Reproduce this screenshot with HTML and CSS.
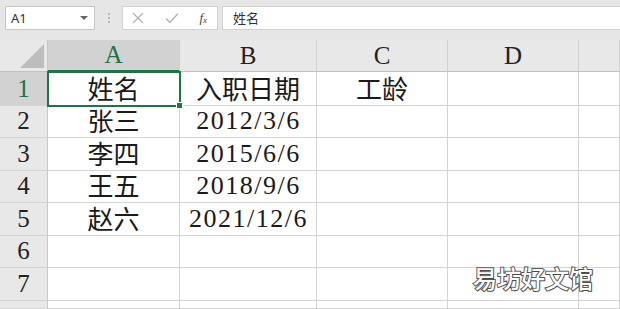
FILE: index.html
```html
<!DOCTYPE html>
<html>
<head>
<title>工作簿</title>
<meta charset="utf-8">
<link rel="stylesheet" href="styles.css">
</head>
<body>

<div class="toolbar">
  <div class="namebox">
    <span>A1</span>
    <span class="caret"></span>
  </div>
  <div class="grip"><i></i><i></i><i></i></div>
  <div class="fxbox">
    <svg width="12" height="12" viewBox="0 0 12 12"><path d="M1 1L11 11M11 1L1 11" stroke="#b4b4b4" stroke-width="1.3" fill="none"/></svg>
    <svg width="14" height="12" viewBox="0 0 14 12"><path d="M1 6.5L5 10.5L13 1.5" stroke="#b4b4b4" stroke-width="1.5" fill="none"/></svg>
    <span class="fx">f<sub>x</sub></span>
  </div>
  <div class="formula">姓名</div>
</div>

<div class="sheet">
  <div class="corner"><span class="tri"></span></div>
  <div class="colhead sel">A</div>
  <div class="colhead">B</div>
  <div class="colhead">C</div>
  <div class="colhead">D</div>
  <div class="colhead"></div>

  <div class="rowhead sel">1</div>
  <div class="cell active">姓名</div>
  <div class="cell">入职日期</div>
  <div class="cell">工龄</div>
  <div class="cell"></div>
  <div class="cell"></div>

  <div class="rowhead">2</div>
  <div class="cell">张三</div>
  <div class="cell num">2012/3/6</div>
  <div class="cell"></div>
  <div class="cell"></div>
  <div class="cell"></div>

  <div class="rowhead">3</div>
  <div class="cell">李四</div>
  <div class="cell num">2015/6/6</div>
  <div class="cell"></div>
  <div class="cell"></div>
  <div class="cell"></div>

  <div class="rowhead">4</div>
  <div class="cell">王五</div>
  <div class="cell num">2018/9/6</div>
  <div class="cell"></div>
  <div class="cell"></div>
  <div class="cell"></div>

  <div class="rowhead">5</div>
  <div class="cell">赵六</div>
  <div class="cell num">2021/12/6</div>
  <div class="cell"></div>
  <div class="cell"></div>
  <div class="cell"></div>

  <div class="rowhead">6</div>
  <div class="cell"></div>
  <div class="cell"></div>
  <div class="cell"></div>
  <div class="cell"></div>
  <div class="cell"></div>

  <div class="rowhead">7</div>
  <div class="cell"></div>
  <div class="cell"></div>
  <div class="cell"></div>
  <div class="cell"></div>
  <div class="cell"></div>

  <div class="rowhead"></div>
  <div class="cell"></div>
  <div class="cell"></div>
  <div class="cell"></div>
  <div class="cell"></div>
  <div class="cell"></div>

  <div class="watermark">易坊好文馆</div>
</div>

</body>
</html>
```

FILE: styles.css
```css
body {
  margin: 0;
  width: 620px;
  height: 309px;
  overflow: hidden;
  background: #e6e6e6;
  font-family: "Liberation Serif", "Noto Sans CJK SC", serif;
}

.toolbar {
  display: flex;
  align-items: stretch;
  height: 40px;
  padding: 6px 0 0 5px;
  box-sizing: border-box;
}

.toolbar > div {
  height: 24px;
  box-sizing: border-box;
}

.namebox {
  width: 90px;
  background: #fff;
  border: 1px solid #c6c6c6;
  display: flex;
  align-items: center;
  justify-content: space-between;
  padding: 0 5px 0 5px;
  font-family: "Noto Sans", "Noto Sans CJK SC", sans-serif;
  font-size: 13px;
  color: #333;
}

.caret {
  width: 0;
  height: 0;
  border-left: 4px solid transparent;
  border-right: 4px solid transparent;
  border-top: 4px solid #666;
  margin-right: 1px;
}

.grip {
  width: 27px;
  display: flex;
  flex-direction: column;
  align-items: center;
  justify-content: center;
  gap: 2px;
}

.grip i {
  width: 2px;
  height: 2px;
  background: #b8b8b8;
}

.fxbox {
  width: 96px;
  background: #fff;
  border: 1px solid #d2d2d2;
  display: flex;
  align-items: center;
  justify-content: space-between;
  padding: 0 10px 0 9px;
}

.fx {
  font-family: "Liberation Serif", serif;
  font-style: italic;
  font-size: 13px;
  color: #444;
}

.fx sub {
  font-size: 9px;
  vertical-align: -1px;
}

.formula {
  flex: 1;
  margin-left: 4px;
  background: #fff;
  border: 1px solid #d2d2d2;
  border-right: none;
  padding-left: 10px;
  line-height: 22px;
  font-family: "Noto Sans CJK SC", sans-serif;
  font-size: 13px;
  color: #333;
}

.sheet {
  position: relative;
  display: grid;
  grid-template-columns: 48px 132px 137px 131px 131px 1fr;
  grid-template-rows: 32px 34px 32px 33px 32px 33px 32px 33px 1fr;
  background: #fff;
  height: 269px;
  overflow: hidden;
}

.colhead,
.rowhead,
.corner {
  background: #e8e8e8;
  border-right: 1px solid #c8c8c8;
  border-bottom: 1px solid #c0c0c0;
  box-sizing: border-box;
  color: #222;
  font-size: 25px;
  display: flex;
  align-items: flex-end;
  justify-content: center;
  padding-bottom: 1px;
}

.colhead {
  border-right-color: #d0d0d0;
}

.rowhead {
  border-bottom-color: #d4d4d4;
  padding-bottom: 2px;
}

.colhead.sel {
  background: #d2d2d2;
  color: #217346;
  border-bottom: 2px solid #217346;
}

.rowhead.sel {
  background: #d2d2d2;
  color: #217346;
}

.corner {
  position: relative;
}

.tri {
  position: absolute;
  right: 3px;
  bottom: 3px;
  width: 0;
  height: 0;
  border-left: 24px solid transparent;
  border-bottom: 24px solid #bdbdbd;
}

.cell {
  border-right: 1px solid #d4d4d4;
  border-bottom: 1px solid #d4d4d4;
  box-sizing: border-box;
  display: flex;
  align-items: flex-end;
  justify-content: center;
  padding-bottom: 0;
  font-size: 26px;
  line-height: 28px;
  color: #1a1a1a;
}

.cell.num {
  letter-spacing: 1.5px;
  padding-left: 1px;
  padding-bottom: 1px;
  line-height: 30px;
}

.cell.active {
  position: relative;
  z-index: 1;
  outline: 2px solid #217346;
  outline-offset: -1px;
}

.cell.active::after {
  content: "";
  position: absolute;
  right: -4px;
  bottom: -4px;
  width: 5px;
  height: 5px;
  background: #217346;
  border: 1px solid #fff;
}

.watermark {
  position: absolute;
  left: 473px;
  top: 220px;
  font-family: "Noto Sans CJK SC", sans-serif;
  font-weight: 500;
  font-size: 24px;
  color: #fff;
  -webkit-text-stroke: 2px #5a5a5a;
  paint-order: stroke fill;
  text-shadow: 1px 1px 1px rgba(0, 0, 0, 0.2);
  z-index: 2;
}
```
